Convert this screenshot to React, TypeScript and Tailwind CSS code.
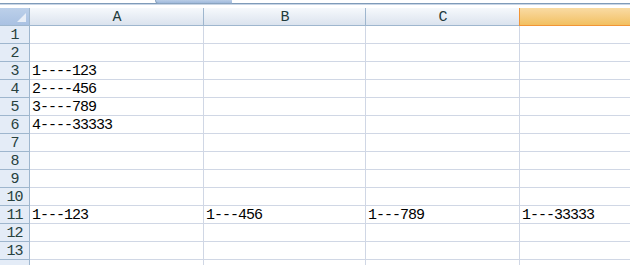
import React from "react";

const cols = [
  { label: "A", w: "w-[174px]" },
  { label: "B", w: "w-[162px]" },
  { label: "C", w: "w-[154px]" },
];

const data: Record<number, string[]> = {
  3: ["1----123", "", "", ""],
  4: ["2----456", "", "", ""],
  5: ["3----789", "", "", ""],
  6: ["4----33333", "", "", ""],
  11: ["1---123", "1---456", "1---789", "1---33333"],
};

const font = { fontFamily: '"Liberation Mono", "DejaVu Sans Mono", monospace' };

export default function App() {
  const rows = Array.from({ length: 14 }, (_, i) => i + 1);
  return (
    <div className="w-[630px] h-[265px] overflow-hidden bg-white text-[15px] tracking-[-1px] leading-none" style={font}>
      {/* top strip */}
      <div className="relative h-[8px] bg-white">
        <div className="absolute left-0 right-0 top-[3px] h-[1px] bg-[#7f9bb9]" />
        <div className="absolute left-0 right-0 top-[4px] h-[1px] bg-[#c9d6e6]" />
        <div className="absolute left-[155px] top-0 w-[77px] h-[4px] rounded-bl-[6px] bg-gradient-to-b from-[#b9cde6] to-[#9fb9dc] border-b border-l border-[#8aa4c0]" />
      </div>
      {/* header */}
      <div className="flex h-[18px]">
        <div className="relative w-[30px] shrink-0 bg-gradient-to-b from-[#bcd0ea] to-[#a9c1e2] border-r border-b border-[#9eb6ce]">
          <div className="absolute right-[3px] bottom-[3px] w-0 h-0 border-l-[9px] border-l-transparent border-b-[9px] border-b-[#e8eef7]" />
        </div>
        {cols.map((c) => (
          <div
            key={c.label}
            className={`${c.w} shrink-0 flex items-center justify-center pt-[2px] bg-gradient-to-b from-[#f6f9fc] to-[#dbe3ee] border-r border-b border-[#9eb6ce] text-[#1f3b3b]`}
          >
            {c.label}
          </div>
        ))}
        <div className="flex-1 bg-gradient-to-b from-[#f9dba3] to-[#f2c060] border-l border-b border-[#f29536] -ml-[1px]" />
      </div>
      {/* rows */}
      {rows.map((r) => {
        const vals = data[r] ?? ["", "", "", ""];
        return (
          <div key={r} className="flex h-[18px]">
            <div className="w-[30px] shrink-0 flex items-center justify-center pt-[2px] bg-[#e4ecf7] border-r border-b border-[#9eb6ce] text-[#27413e]">
              {r < 14 ? r : ""}
            </div>
            {cols.map((c, i) => (
              <div
                key={c.label}
                className={`${c.w} shrink-0 flex items-center pl-[2px] pt-[2px] border-r border-b border-[#d0d7e5] text-black whitespace-nowrap`}
              >
                {vals[i]}
              </div>
            ))}
            <div className="flex-1 flex items-center pl-[2px] pt-[2px] border-b border-[#d0d7e5] text-black whitespace-nowrap">
              {vals[3]}
            </div>
          </div>
        );
      })}
    </div>
  );
}
